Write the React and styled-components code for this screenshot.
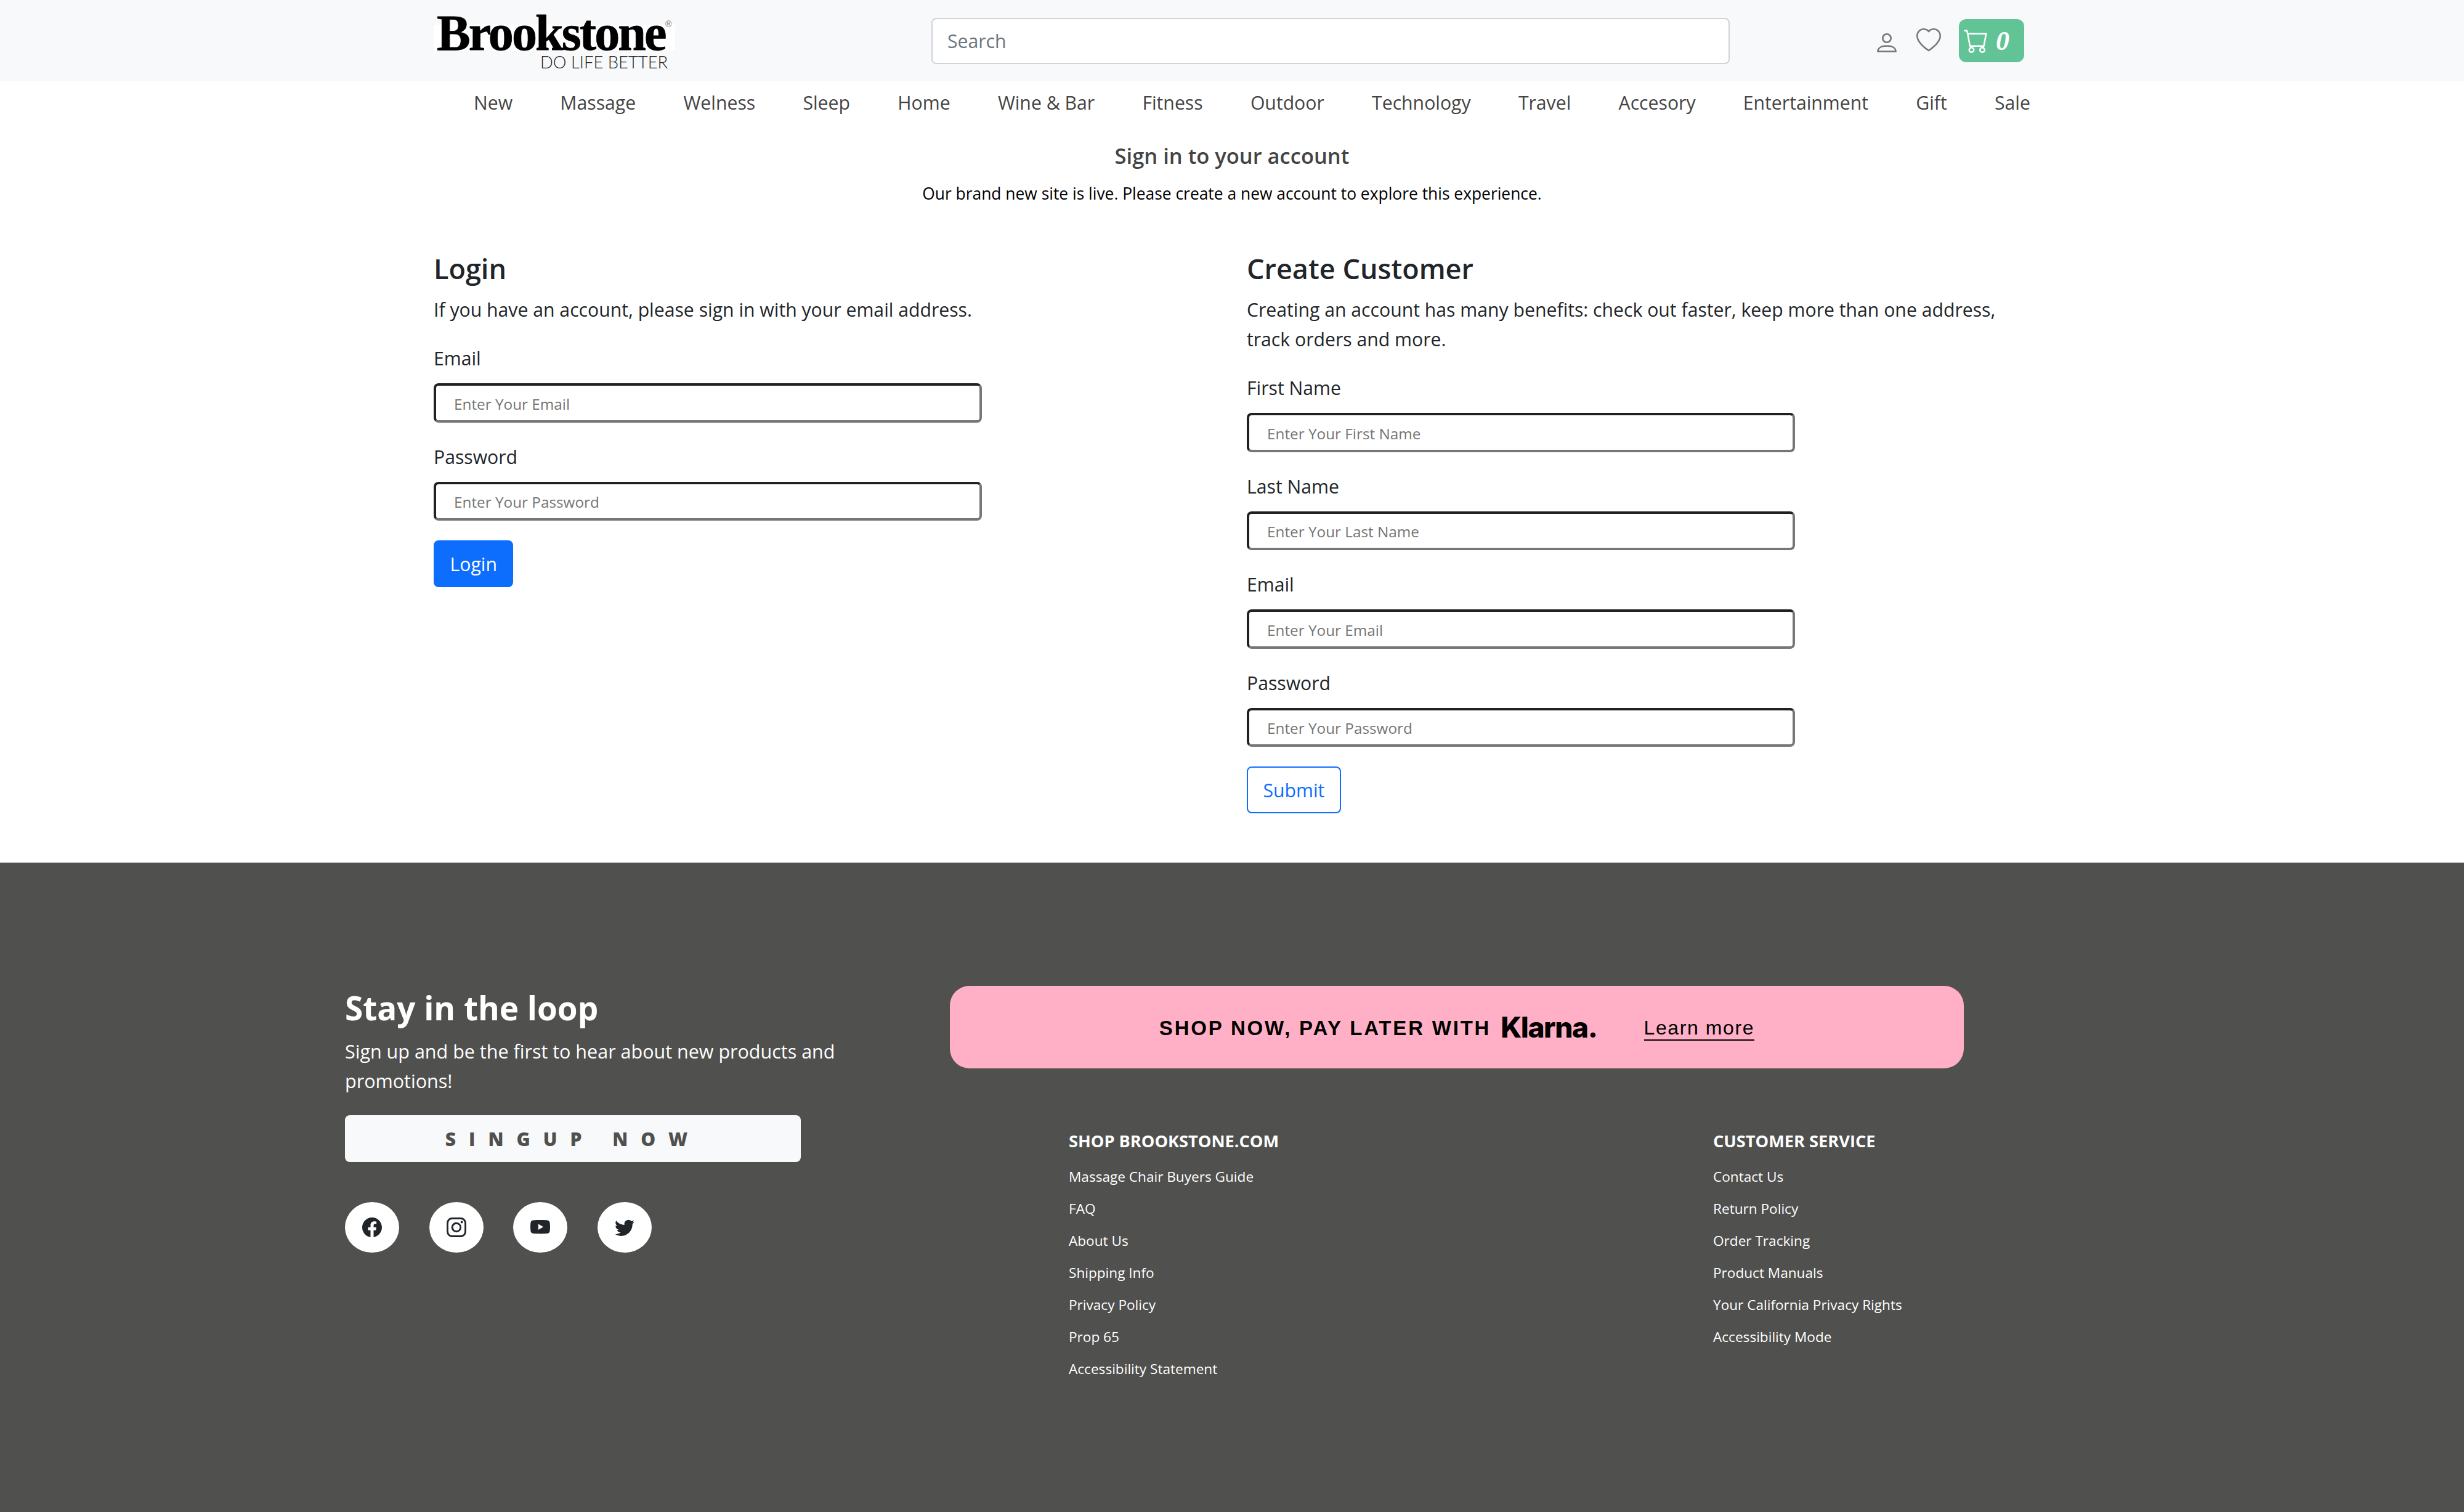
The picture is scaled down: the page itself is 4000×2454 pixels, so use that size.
import styled, { createGlobalStyle } from "styled-components";
import { BsHeart, BsCart, BsFacebook, BsInstagram, BsYoutube, BsTwitter } from "react-icons/bs";

const GlobalStyle = createGlobalStyle`
body {
  margin: 0;
  background: #fff;
  color: #212529;
  font-family: "Open Sans", "Noto Sans", sans-serif;
  font-size: 30.2px;
  line-height: 48px;
}
* { box-sizing: border-box; }
`;

const Header = styled.header`
height: 132px;
background: #f8f9fa;
display: flex;
align-items: center;
padding-left: 704px;
`;

const Logo = styled.div`
width: 808px;
align-self: flex-start;
padding-top: 40px;
display: flex;
flex-direction: column;
`;

const LogoName = styled.span`
position: relative;
display: block;
width: 392px;
height: 42px;
padding-left: 5px;
background: #fff;
font-family: "Liberation Serif", serif;
font-weight: 700;
font-size: 82px;
line-height: 28px;
letter-spacing: -2.9px;
-webkit-text-stroke: 0.8px #000;
color: #000;
`;

const Registered = styled.span`
position: absolute;
left: 376px;
top: -8px;
font-family: "Liberation Sans", sans-serif;
font-size: 14px;
line-height: 14px;
letter-spacing: 0;
font-weight: 400;
-webkit-text-stroke: 0;
color: #777;
`;

const LogoTag = styled.span`
margin: 6px 0 0 173px;
font-family: "Lato", sans-serif;
font-weight: 300;
font-size: 27.4px;
line-height: 26px;
white-space: nowrap;
color: #222;
`;

const Search = styled.input`
width: 1296px;
height: 75px;
border: 2px solid #ced4da;
border-radius: 8px;
background: #fff;
padding: 0 24px;
font-family: inherit;
font-size: 30.2px;
&::placeholder { color: #6c757d; }
`;

const Actions = styled.div`
display: flex;
align-items: center;
margin-left: 239px;
color: #777;
`;

const UserIcon = styled.svg`
width: 32px;
height: 31px;
margin-top: 6px;
fill: none;
stroke: #777;
stroke-width: 2.6;
`;

const HeartSlot = styled.span`
display: flex;
margin: 0 29px 0 32px;
`;

const CartButton = styled.button`
width: 106px;
height: 70px;
border: none;
border-radius: 12px;
background: #62c496;
color: #fff;
display: flex;
align-items: center;
gap: 12px;
padding: 0 0 0 8px;
font-family: "Liberation Serif", serif;
font-size: 44px;
font-weight: 700;
font-style: italic;
`;

const Nav = styled.nav`
height: 68px;
padding: 2px 704px 0 769px;
display: flex;
justify-content: space-between;
align-items: center;
color: #444;
`;

const Intro = styled.div`
text-align: center;
padding-top: 29px;
`;

const IntroTitle = styled.h2`
margin: 0;
font-size: 34.5px;
line-height: 48px;
font-weight: 600;
color: #444;
`;

const IntroText = styled.p`
margin: 16px 0 0;
font-size: 26.4px;
line-height: 42px;
color: #000;
`;

const Columns = styled.main`
display: grid;
grid-template-columns: 1320px 1320px;
padding: 72px 0 80px 704px;
`;

const Heading = styled.h1`
margin: 0 0 14px;
font-size: 45px;
line-height: 58px;
font-weight: 600;
color: #212529;
`;

const Lead = styled.p`
margin: 0 0 31px;
max-width: 1260px;
`;

const Field = styled.div`
margin-bottom: 32px;
`;

const Label = styled.label`
display: block;
margin-bottom: 16px;
`;

const TextInput = styled.input`
display: block;
width: 890px;
height: 63.5px;
border-width: 4px;
border-style: solid;
border-color: #212121 #767676 #767676 #212121;
border-radius: 8px;
padding: 3px 29px 0;
font-family: inherit;
font-size: 24.3px;
&::placeholder { color: #757575; }
`;

const Button = styled.button`
display: block;
height: 76px;
padding: 0 24.5px;
border: 2px solid #0d6efd;
border-radius: 8px;
font-family: inherit;
font-size: 30.2px;
color: ${(props) => (props.$outline ? "#0d6efd" : "#fff")};
background: ${(props) => (props.$outline ? "#fff" : "#0d6efd")};
`;

const Footer = styled.footer`
height: 1054px;
background: #50504e;
color: #fff;
display: flex;
padding: 200px 0 0 560px;
`;

const FooterLeft = styled.div`
width: 982px;
`;

const LoopTitle = styled.h2`
margin: 0;
padding-top: 6px;
font-size: 53px;
line-height: 60px;
font-weight: 700;
`;

const LoopText = styled.p`
margin: 16px 0 32px;
max-width: 830px;
font-size: 30.5px;
`;

const SignupButton = styled.button`
display: block;
width: 740px;
height: 76px;
border: none;
border-radius: 8px;
background: #f8f9fa;
color: #50504e;
font-family: inherit;
font-size: 30px;
font-weight: 800;
letter-spacing: 21px;
`;

const Socials = styled.div`
display: flex;
gap: 48.7px;
margin-top: 65px;
`;

const SocialLink = styled.a`
width: 88px;
height: 82px;
border-radius: 50%;
background: #fff;
color: #212529;
display: flex;
align-items: center;
justify-content: center;
`;

const FooterRight = styled.div`
width: 1646px;
`;

const KlarnaBanner = styled.div`
height: 134px;
border-radius: 32px;
background: #ffb0c6;
color: #000;
display: flex;
align-items: center;
justify-content: center;
font-family: "Liberation Sans", sans-serif;
`;

const KlarnaText = styled.span`
margin-top: 3px;
font-size: 33px;
font-weight: 700;
letter-spacing: 2.8px;
`;

const KlarnaLogo = styled.span`
font-family: "Inter", sans-serif;
font-size: 46px;
font-weight: 800;
letter-spacing: -1.4px;
margin-left: 16px;
`;

const KlarnaLink = styled.a`
margin: 3px 0 0 76px;
font-size: 32px;
letter-spacing: 1.6px;
line-height: 38px;
border-bottom: 2px solid #000;
`;

const LinkColumns = styled.div`
display: flex;
padding: 98px 0 0 193px;
`;

const LinkColumn = styled.div`
flex: none;
width: 1046px;
`;

const LinkHeading = styled.h3`
margin: 0 0 12px;
font-size: 27.2px;
line-height: 40px;
font-weight: 700;
text-transform: uppercase;
`;

const FooterLink = styled.a`
display: block;
font-size: 22.6px;
line-height: 52px;
color: #fff;
`;

const navItems = ["New", "Massage", "Welness", "Sleep", "Home", "Wine & Bar", "Fitness", "Outdoor", "Technology", "Travel", "Accesory", "Entertainment", "Gift", "Sale"];
const shopLinks = ["Massage Chair Buyers Guide", "FAQ", "About Us", "Shipping Info", "Privacy Policy", "Prop 65", "Accessibility Statement"];
const serviceLinks = ["Contact Us", "Return Policy", "Order Tracking", "Product Manuals", "Your California Privacy Rights", "Accessibility Mode"];
const loginFields = [
    { label: "Email", placeholder: "Enter Your Email" },
    { label: "Password", placeholder: "Enter Your Password" },
];
const customerFields = [
    { label: "First Name", placeholder: "Enter Your First Name" },
    { label: "Last Name", placeholder: "Enter Your Last Name" },
    { label: "Email", placeholder: "Enter Your Email" },
    { label: "Password", placeholder: "Enter Your Password" },
];

const Fields = ({ items }) => items.map((item) => (
    <Field key={item.label}>
        <Label>{item.label}</Label>
        <TextInput placeholder={item.placeholder} />
    </Field>
));

const App = () => {
    return (
        <>
            <GlobalStyle />
            <Header>
                <Logo>
                    <LogoName>Brookstone<Registered>®</Registered></LogoName>
                    <LogoTag>DO LIFE BETTER</LogoTag>
                </Logo>
                <Search placeholder="Search" />
                <Actions>
                    <UserIcon viewBox="0 0 32 31">
                        <circle cx="16" cy="8" r="6.7" />
                        <path d="M1.5 29.5c0-6 6.2-9 14.500-9s14.500 3 14.500 9z" />
                    </UserIcon>
                    <HeartSlot><BsHeart size={40} /></HeartSlot>
                    <CartButton><BsCart size={40} />0</CartButton>
                </Actions>
            </Header>
            <Nav>
                {navItems.map((item) => <span key={item}>{item}</span>)}
            </Nav>
            <Intro>
                <IntroTitle>Sign in to your account</IntroTitle>
                <IntroText>Our brand new site is live. Please create a new account to explore this experience.</IntroText>
            </Intro>
            <Columns>
                <section>
                    <Heading>Login</Heading>
                    <Lead>If you have an account, please sign in with your email address.</Lead>
                    <Fields items={loginFields} />
                    <Button>Login</Button>
                </section>
                <section>
                    <Heading>Create Customer</Heading>
                    <Lead>Creating an account has many benefits: check out faster, keep more than one address, track orders and more.</Lead>
                    <Fields items={customerFields} />
                    <Button $outline>Submit</Button>
                </section>
            </Columns>
            <Footer>
                <FooterLeft>
                    <LoopTitle>Stay in the loop</LoopTitle>
                    <LoopText>Sign up and be the first to hear about new products and promotions!</LoopText>
                    <SignupButton>SINGUP NOW</SignupButton>
                    <Socials>
                        <SocialLink><BsFacebook size={32} /></SocialLink>
                        <SocialLink><BsInstagram size={32} /></SocialLink>
                        <SocialLink><BsYoutube size={32} /></SocialLink>
                        <SocialLink><BsTwitter size={32} /></SocialLink>
                    </Socials>
                </FooterLeft>
                <FooterRight>
                    <KlarnaBanner>
                        <KlarnaText>SHOP NOW, PAY LATER WITH</KlarnaText>
                        <KlarnaLogo>Klarna.</KlarnaLogo>
                        <KlarnaLink>Learn more</KlarnaLink>
                    </KlarnaBanner>
                    <LinkColumns>
                        <LinkColumn>
                            <LinkHeading>Shop Brookstone.com</LinkHeading>
                            {shopLinks.map((item) => <FooterLink key={item}>{item}</FooterLink>)}
                        </LinkColumn>
                        <LinkColumn>
                            <LinkHeading>Customer Service</LinkHeading>
                            {serviceLinks.map((item) => <FooterLink key={item}>{item}</FooterLink>)}
                        </LinkColumn>
                    </LinkColumns>
                </FooterRight>
            </Footer>
        </>
    )
}

export default App;
